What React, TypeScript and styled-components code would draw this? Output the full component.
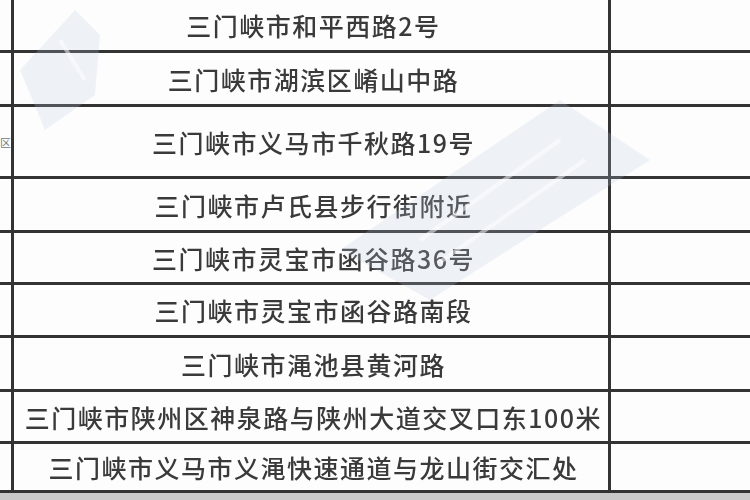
import React from "react";
import styled, { createGlobalStyle } from "styled-components";

const GlobalStyle = createGlobalStyle`
  html, body {
    margin: 0;
    padding: 0;
    background: #ffffff;
  }
  body {
    font-family: "Noto Sans CJK SC", "Noto Sans", sans-serif;
  }
`;

const Page = styled.div`
  position: relative;
  width: 750px;
  height: 500px;
  overflow: hidden;
  background: #fdfdfd;
`;

const Sheet = styled.div`
  display: flex;
  flex-direction: column;
`;

const Row = styled.div<{ $h: number }>`
  display: grid;
  grid-template-columns: 14px 597px 1fr;
  height: ${(p) => p.$h}px;
  box-sizing: border-box;
  border-bottom: 3px solid #333333;
`;

const SideCell = styled.div`
  display: flex;
  align-items: center;
  justify-content: center;
  overflow: hidden;
  border-right: 3px solid #333333;
  font-size: 11px;
  color: #777;
  white-space: nowrap;
`;

const AddressCell = styled.div`
  display: flex;
  align-items: center;
  justify-content: center;
  padding-left: 5px;
  border-right: 3px solid #333333;
  font-size: 25px;
  font-weight: 500;
  color: #3a3a3a;
  white-space: nowrap;
  letter-spacing: 1.5px;
  filter: blur(0.45px);
`;

const EmptyCell = styled.div``;

const BottomBand = styled.div`
  height: 7px;
  background: #c9c9c9;
`;

const Watermark = styled.svg`
  position: absolute;
  left: 0;
  top: 0;
  pointer-events: none;
`;

const rows = [
  { h: 53, text: "三门峡市和平西路2号" },
  { h: 54, text: "三门峡市湖滨区崤山中路" },
  { h: 72, text: "三门峡市义马市千秋路19号", side: "区" },
  { h: 54, text: "三门峡市卢氏县步行街附近" },
  { h: 52, text: "三门峡市灵宝市函谷路36号" },
  { h: 53, text: "三门峡市灵宝市函谷路南段" },
  { h: 54, text: "三门峡市渑池县黄河路" },
  { h: 52, text: "三门峡市陕州区神泉路与陕州大道交叉口东100米" },
  { h: 49, text: "三门峡市义马市义渑快速通道与龙山街交汇处" },
];

export default function App() {
  return (
    <Page>
      <GlobalStyle />
      <Sheet>
        {rows.map((r, i) => (
          <Row key={i} $h={r.h}>
            <SideCell>{r.side ?? ""}</SideCell>
            <AddressCell>{r.text}</AddressCell>
            <EmptyCell />
          </Row>
        ))}
        <BottomBand />
      </Sheet>
      <Watermark width="750" height="500" viewBox="0 0 750 500">
        <g fill="#bccde4" opacity="0.22">
          <polygon points="20,70 75,10 100,35 95,95 45,130" />
          <polygon points="340,250 560,100 650,160 430,300" />
        </g>
        <g stroke="#ffffff" strokeWidth="4" opacity="0.5">
          <line x1="420" y1="240" x2="560" y2="140" />
          <line x1="440" y1="262" x2="585" y2="160" />
          <line x1="60" y1="40" x2="85" y2="80" />
        </g>
      </Watermark>
    </Page>
  );
}
